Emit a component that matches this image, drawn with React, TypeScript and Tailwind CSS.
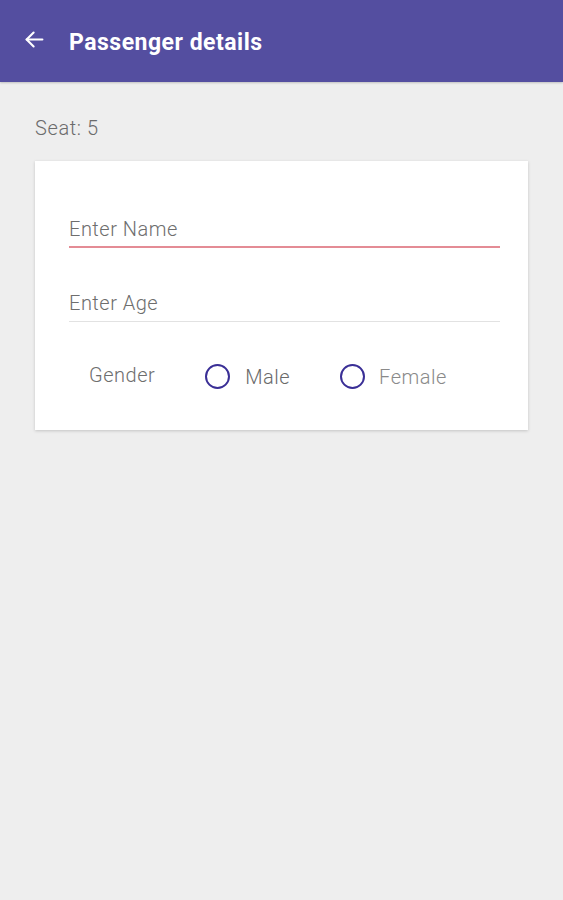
import React from "react";

export default function App() {
  return (
    <div className="w-[563px] h-[900px] bg-[#eeeeee] flex flex-col" style={{ fontFamily: "Roboto, 'Noto Sans', sans-serif" }}>
      <header className="h-[82px] bg-[#544ea0] flex items-center shadow-[0_1px_2px_rgba(0,0,0,0.2)]">
        <svg className="ml-[24px] mt-[-4px]" width="21" height="21" viewBox="0 0 24 24" fill="none" stroke="white" strokeWidth="2.4" strokeLinecap="round" strokeLinejoin="round">
          <path d="M21 12H3" />
          <path d="M11 4l-8 8 8 8" />
        </svg>
        <h1 className="ml-[24px] mt-[5px] text-white text-[23px] font-bold tracking-[0.5px]">Passenger details</h1>
      </header>
      <div className="px-[35px] pt-[34px]">
        <div className="text-[20px] tracking-[0.6px] text-[#6b6b6b] font-light leading-none h-[24px] flex items-center">Seat: 5</div>
        <div className="mt-[21px] w-[493px] h-[269px] bg-white shadow-[0_1px_3px_rgba(0,0,0,0.18)] pl-[34px] pr-[28px] pt-[53px]">
          <div className="border-b-2 border-[#e48c95] h-[34px] flex items-start">
            <span className="text-[20px] tracking-[0.5px] text-[#6e6e6e] font-light leading-[30px]">Enter Name</span>
          </div>
          <div className="mt-[40px] border-b border-[#e2e2e2] h-[34px] flex items-start">
            <span className="text-[20px] tracking-[0.5px] text-[#6e6e6e] font-light leading-[30px]">Enter Age</span>
          </div>
          <div className="mt-[42px] flex items-center">
            <span className="ml-[20px] text-[20px] tracking-[0.5px] text-[#6e6e6e] font-light leading-none mt-[-3px]">Gender</span>
            <div className="ml-[50px] w-[25px] h-[25px] rounded-full border-2 border-[#3a2f96]" />
            <span className="ml-[15px] text-[20px] tracking-[0.5px] text-[#6a6a6a] font-light leading-none">Male</span>
            <div className="ml-[50px] w-[25px] h-[25px] rounded-full border-2 border-[#3a2f96]" />
            <span className="ml-[14px] text-[20px] tracking-[0.5px] text-[#8a8a8a] font-light leading-none">Female</span>
          </div>
        </div>
      </div>
    </div>
  );
}
